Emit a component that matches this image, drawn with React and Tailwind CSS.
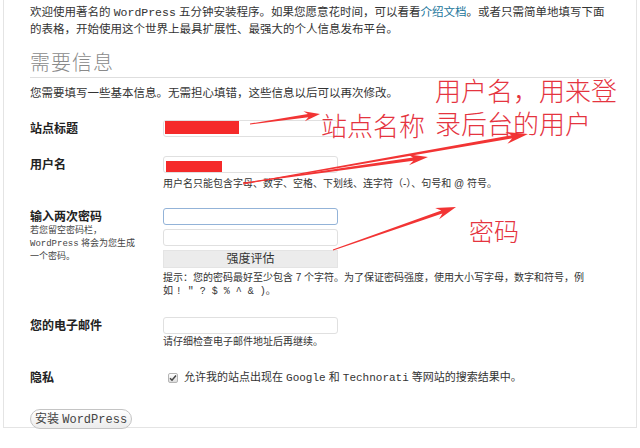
import React from 'react';

const arrows = [
  { s: [250, 124], t: [320, 114], len: 16, w: 5 },
  { s: [243, 183], t: [428, 157], len: 20, w: 5.5 },
  { s: [243, 184], t: [528, 134], len: 22, w: 6 },
  { s: [333, 250], t: [456, 207], len: 20, w: 6 },
];

// builds a tapering arrow polygon from tail to tip
const arrowPoints = ({ s, t, len, w }) => {
  const dx = t[0] - s[0];
  const dy = t[1] - s[1];
  const d = Math.hypot(dx, dy);
  const ux = dx / d;
  const uy = dy / d;
  const nx = -uy;
  const ny = ux;
  const p = (bx, by, along, side) => [bx + ux * along + nx * side, by + uy * along + ny * side];
  const pts = [
    p(s[0], s[1], 0, 0.4),
    p(t[0], t[1], -len * 0.75, 1.6),
    p(t[0], t[1], -len, w),
    t,
    p(t[0], t[1], -len, -w),
    p(t[0], t[1], -len * 0.75, -1.6),
    p(s[0], s[1], 0, -0.4),
  ];
  return pts.map((q) => q.join(',')).join(' ');
};

const Input = ({ focused, children, className = '' }) => (
  <div
    className={`relative w-[175px] h-[17px] rounded-[3px] bg-white border ${
      focused ? 'border-[#93b3d8]' : 'border-[#e0e0e0]'
    } ${className}`}
  >
    {children}
  </div>
);

const Mono = ({ children }) => (
  <span className="font-['Liberation_Mono',monospace]">{children}</span>
);

const App = () => {
  return (
    <div className="relative min-h-screen bg-white text-[#333] font-['Liberation_Sans','Noto_Sans_CJK_SC',sans-serif] overflow-hidden">
      <div className="ml-[3px] w-[634px] h-[428px] border-x border-b border-[#e4e4e4] px-[26px] pt-[4px]">
        {/* intro */}
        <p className="text-[11.5px] leading-[16px] whitespace-nowrap">
          欢迎使用著名的 <Mono>WordPress</Mono> 五分钟安装程序。如果您愿意花时间，可以看看
          <span className="text-[#21759b]">介绍文档</span>。或者只需简单地填写下面
          <br />
          的表格，开始使用这个世界上最具扩展性、最强大的个人信息发布平台。
        </p>

        <h2 className="mt-[14px] pb-[2px] border-b border-[#dedede] text-[20px] leading-[24px] tracking-[1px] text-[#8a8a8a] font-light">
          需要信息
        </h2>
        <p className="mt-[7px] text-[11.5px] leading-[16px]">
          您需要填写一些基本信息。无需担心填错，这些信息以后可以再次修改。
        </p>

        {/* form table */}
        <div className="mt-[19px] grid grid-cols-[133px_1fr] text-[12px]">
          {/* site title */}
          <div className="font-bold text-[#222] leading-[17px] pt-[1px]">站点标题</div>
          <div>
            <Input>
              <div className="absolute left-[1px] top-[0px] w-[74px] h-[13px] bg-[#f52a2a]" />
            </Input>
          </div>

          {/* username */}
          <div className="mt-[18px] font-bold text-[#222] leading-[17px] pt-[1px]">用户名</div>
          <div className="mt-[18px]">
            <Input>
              <div className="absolute left-[2px] top-[4px] w-[56px] h-[11px] bg-[#f52a2a]" />
            </Input>
            <p className="mt-[4px] text-[10px] leading-[13px] whitespace-nowrap">
              用户名只能包含字母、数字、空格、下划线、连字符（-）、句号和 @ 符号。
            </p>
          </div>

          {/* password */}
          <div className="mt-[18px] pt-[1px]">
            <div className="font-bold text-[#222] leading-[16px]">输入两次密码</div>
            <p className="mt-[-1px] text-[9px] leading-[12.5px] text-[#444]">
              若您留空密码栏，
              <br />
              <Mono>WordPress</Mono> 将会为您生成
              <br />
              一个密码。
            </p>
          </div>
          <div className="mt-[18px]">
            <Input focused />
            <Input className="mt-[4px]" />
            <div className="mt-[4px] w-[175px] h-[18px] bg-[#ececec] border border-[#e4e4e4] flex items-center justify-center text-[12px] text-[#333]">
              强度评估
            </div>
            <p className="mt-[3px] text-[10px] leading-[13px] whitespace-nowrap">
              提示：您的密码最好至少包含 7 个字符。为了保证密码强度，使用大小写字母，数字和符号，例
              <br />
              如 <Mono>! " ? $ % ^ &amp; )</Mono>。
            </p>
          </div>

          {/* email */}
          <div className="mt-[19px] font-bold text-[#222] leading-[17px] pt-[1px]">您的电子邮件</div>
          <div className="mt-[19px]">
            <Input />
            <p className="mt-[1px] text-[10px] leading-[13px]">请仔细检查电子邮件地址后再继续。</p>
          </div>

          {/* privacy */}
          <div className="mt-[21px] font-bold text-[#222] leading-[16px] pt-[1px]">隐私</div>
          <div className="mt-[21px] flex items-center gap-[6px] pl-[5px] text-[11px] leading-[16px]">
            <span className="w-[10px] h-[10px] rounded-[2px] border border-[#b5b5b5] bg-gradient-to-b from-[#fff] to-[#ddd] flex items-center justify-center">
              <svg width="8" height="8" viewBox="0 0 8 8">
                <path d="M1 4.2 L3 6.2 L7 1.5" fill="none" stroke="#444" strokeWidth="1.5" />
              </svg>
            </span>
            <span className="whitespace-nowrap">
              允许我的站点出现在 <Mono>Google</Mono> 和 <Mono>Technorati</Mono> 等网站的搜索结果中。
            </span>
          </div>
        </div>

        <button className="mt-[23px] h-[20px] w-[102px] rounded-full border border-[#c4c4c4] bg-gradient-to-b from-white to-[#ececec] text-[12px] leading-[18px] text-[#444]">
          安装 <Mono>WordPress</Mono>
        </button>
      </div>

      {/* annotations */}
      <svg className="absolute left-0 top-0 pointer-events-none" width="640" height="448">
        {arrows.map((a, i) => (
          <polygon key={i} points={arrowPoints(a)} fill="#f23434" />
        ))}
      </svg>
      <div className="absolute left-[435px] top-[73px] text-[26px] leading-[33px] text-[#e5343f] font-light font-['Noto_Sans_CJK_SC',sans-serif] whitespace-nowrap">
        用户名，用来登
        <br />
        录后台的用户
      </div>
      <div className="absolute left-[321px] top-[112px] text-[26px] leading-[26px] text-[#e5343f] font-light font-['Noto_Sans_CJK_SC',sans-serif] whitespace-nowrap">
        站点名称
      </div>
      <div className="absolute left-[469px] top-[217px] text-[25px] leading-[26px] text-[#e5343f] font-light font-['Noto_Sans_CJK_SC',sans-serif] whitespace-nowrap">
        密码
      </div>
    </div>
  );
};

export default App;
